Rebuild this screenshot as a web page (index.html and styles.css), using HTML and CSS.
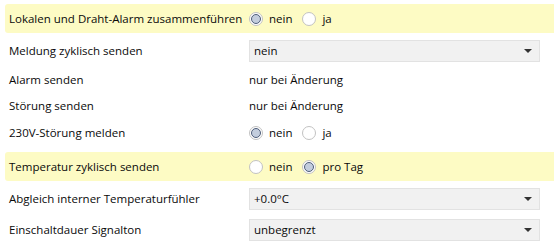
FILE: index.html
```html
<!DOCTYPE html>
<html lang="de">
<head>
<meta charset="utf-8">
<link rel="stylesheet" href="styles.css">
</head>
<body>
<div class="list">
  <div class="row hl r1">
    <span class="label">Lokalen und Draht-Alarm zusammenführen</span>
    <div class="radios">
      <label class="opt"><span class="radio on"></span><span>nein</span></label>
      <label class="opt"><span class="radio"></span><span>ja</span></label>
    </div>
  </div>
  <div class="row sel r2">
    <span class="label">Meldung zyklisch senden</span>
    <div class="select"><span>nein</span><span class="arrow"></span></div>
  </div>
  <div class="row txt">
    <span class="label">Alarm senden</span>
    <span class="value">nur bei Änderung</span>
  </div>
  <div class="row txt">
    <span class="label">Störung senden</span>
    <span class="value">nur bei Änderung</span>
  </div>
  <div class="row rad">
    <span class="label">230V-Störung melden</span>
    <div class="radios">
      <label class="opt"><span class="radio on"></span><span>nein</span></label>
      <label class="opt"><span class="radio"></span><span>ja</span></label>
    </div>
  </div>
  <div class="row hl r6">
    <span class="label">Temperatur zyklisch senden</span>
    <div class="radios">
      <label class="opt"><span class="radio"></span><span>nein</span></label>
      <label class="opt"><span class="radio on"></span><span>pro Tag</span></label>
    </div>
  </div>
  <div class="row sel r7">
    <span class="label">Abgleich interner Temperaturfühler</span>
    <div class="select"><span>+0.0°C</span><span class="arrow"></span></div>
  </div>
  <div class="row sel">
    <span class="label">Einschaltdauer Signalton</span>
    <div class="select"><span>unbegrenzt</span><span class="arrow"></span></div>
  </div>
</div>
</body>
</html>
```
FILE: styles.css
```css
html, body {
  margin: 0;
  padding: 0;
  background: #ffffff;
  overflow: hidden;
}
body {
  font-family: "Open Sans", "Noto Sans", sans-serif;
  font-size: 11.5px;
  color: #0a0a0a;
}
.list {
  display: flex;
  flex-direction: column;
  padding-top: 4px;
  margin-left: 5px;
  width: 560px;
}
.row {
  display: grid;
  grid-template-columns: 240px 291px;
  align-items: center;
  padding-left: 4px;
  height: 26px;
}
.row.hl {
  background: #fdfbc4;
  border-radius: 3px;
  height: 29px;
}
.row.rad { height: 29px; }
.row.sel { height: 31px; }
.row.r2 { margin-top: 2px; }
.row.r6 { margin-top: 5px; }
.row.r7 { margin-top: 2px; }
.radios {
  display: flex;
  align-items: center;
  gap: 10px;
}
.opt {
  display: flex;
  align-items: center;
  gap: 6px;
}
.radio {
  width: 14px;
  height: 14px;
  box-sizing: border-box;
  border-radius: 50%;
  border: 1px solid #c2c2c2;
  background: #ffffff;
  position: relative;
}
.radio.on::after {
  content: "";
  position: absolute;
  left: 1px;
  top: 1px;
  width: 10px;
  height: 10px;
  box-sizing: border-box;
  border-radius: 50%;
  border: 1px solid #4f5e7a;
  background: #c3cddd;
}
.select {
  height: 22px;
  box-sizing: border-box;
  border: 1px solid #e2e2e2;
  background: #f1f1f1;
  display: flex;
  align-items: center;
  justify-content: space-between;
  padding: 0 7px 0 4px;
}
.arrow {
  width: 0;
  height: 0;
  border-left: 4px solid transparent;
  border-right: 4px solid transparent;
  border-top: 4px solid #333333;
}
```
